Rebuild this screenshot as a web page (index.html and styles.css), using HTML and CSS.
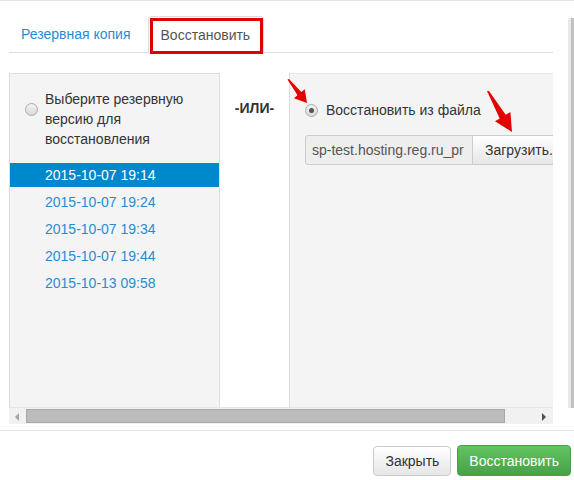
FILE: index.html
```html
<html>
<head>
	<meta http-equiv="Content-Type" content="text/html; charset=UTF-8">
	<link rel="stylesheet" href="styles.css">
</head>
<body>
	<div class="modal">
		<div class="modal_body">
			<ul class="tabs">
				<li class="tab"><a href="#">Резервная копия</a></li>
				<li class="tab tab_active"><a href="#">Восстановить</a></li>
			</ul>
			<div class="scroller">
				<div class="panes">
					<div class="pane_left">
						<label class="pick">
							<span class="radio"></span>
							<span class="pick_text">Выберите резервную версию для восстановления</span>
						</label>
						<ul class="versions">
							<li class="version version_sel">2015-10-07 19:14</li>
							<li class="version">2015-10-07 19:24</li>
							<li class="version">2015-10-07 19:34</li>
							<li class="version">2015-10-07 19:44</li>
							<li class="version">2015-10-13 09:58</li>
						</ul>
					</div>
					<div class="pane_or">-ИЛИ-</div>
					<div class="pane_right">
						<label class="pick_file">
							<span class="radio radio_on"></span>
							<span>Восстановить из файла</span>
						</label>
						<div class="file_group">
							<div class="file_name">sp-test.hosting.reg.ru_pr</div>
							<div class="file_btn">Загрузить...</div>
						</div>
					</div>
				</div>
				<div class="hscroll">
					<span class="hscroll_left"></span>
					<span class="hscroll_thumb"></span>
					<span class="hscroll_right"></span>
				</div>
			</div>
		</div>
		<div class="modal_footer">
			<button class="btn">Закрыть</button>
			<button class="btn btn_ok">Восстановить</button>
		</div>
	</div>
	<div class="vscroll"></div>
	<svg class="marks" width="574" height="480" viewBox="0 0 574 480">
		<polygon fill="#e50000" points="287.5,79.5 297.5,95.3 294,98.2 307,103 304.8,89.2 301.3,92.1 289,79"/>
		<polygon fill="#e50000" points="487,91 499.7,118.4 495,121.2 512,132 510.4,112 505.7,114.8 489,91"/>
	</svg>
</body>
</html>
```

FILE: styles.css
```css
body
{
	margin: 0;
	background-color: #fff;
	font-family: "Liberation Sans", Arial, sans-serif;
	font-size: 14px;
	color: #333;
}
.modal
{
	width: 574px;
	height: 480px;
	border-top: 1px solid #e5e5e5;
	box-sizing: border-box;
	overflow: hidden;
}
.modal_body
{
	padding-left: 9px;
	width: 544px;
}
.tabs
{
	display: flex;
	margin: 15px 0 0 0;
	padding: 0;
	list-style: none;
	border-bottom: 1px solid #ddd;
	height: 36px;
}
.tab
{
	margin-right: 5px;
}
.tab a
{
	display: block;
	height: 36px;
	line-height: 37px;
	padding: 0 12px 0 12px;
	color: #2a8bd4;
	text-decoration: none;
}
.tab_active a
{
	position: relative;
	height: 36px;
	padding: 0 13px 0 12px;
	color: #555;
	background-color: #fff;
	border: 1px solid #ddd;
	border-bottom-color: #fff;
	border-radius: 4px 4px 0 0;
}
.tab_active a:after
{
	content: "";
	position: absolute;
	left: 1px;
	top: 1px;
	right: 0;
	bottom: -1px;
	border: 3px solid #e00000;
}
.scroller
{
	margin-top: 20px;
	width: 544px;
	height: 351px;
	overflow: hidden;
}
.panes
{
	display: flex;
	height: 334px;
	width: 700px;
}
.pane_left
{
	width: 211px;
	height: 334px;
	box-sizing: border-box;
	background-color: #f4f4f4;
	border: 1px solid #ddd;
	border-bottom: none;
}
.pick
{
	display: flex;
	align-items: flex-start;
	padding: 15px 0 0 15px;
	line-height: 20px;
}
.radio
{
	display: inline-block;
	flex: none;
	width: 11px;
	height: 11px;
	border: 1px solid #a9a9a9;
	border-radius: 50%;
	background: linear-gradient(#f3f3f3, #d9d9d9);
	position: relative;
}
.pick .radio
{
	margin-top: 14px;
	margin-right: 7px;
}
.radio_on:after
{
	content: "";
	position: absolute;
	left: 3px;
	top: 3px;
	width: 5px;
	height: 5px;
	border-radius: 50%;
	background-color: #555;
}
.pick_text
{
	width: 150px;
}
.versions
{
	list-style: none;
	margin: 14px 0 0 0;
	padding: 0;
}
.version
{
	height: 24px;
	line-height: 24px;
	margin-bottom: 3px;
	padding-left: 35px;
	color: #2a8bd4;
}
.version_sel
{
	background-color: #0088cc;
	color: #fff;
}
.pane_or
{
	width: 69px;
	padding-top: 25px;
	line-height: 20px;
	text-align: center;
	font-weight: bold;
	background-color: #fff;
}
.pane_right
{
	width: 300px;
	height: 334px;
	box-sizing: border-box;
	background-color: #f4f4f4;
	border-left: 1px solid #ddd;
	border-top: 1px solid #e8e8e8;
	padding: 26px 0 0 15px;
}
.pick_file
{
	display: flex;
	align-items: center;
	height: 20px;
}
.pick_file .radio
{
	margin-right: 8px;
}
.file_group
{
	display: flex;
	margin-top: 15px;
	height: 30px;
}
.file_name
{
	width: 168px;
	box-sizing: border-box;
	padding: 0 6px;
	line-height: 28px;
	background-color: #eee;
	color: #555;
	border: 1px solid #ccc;
	border-radius: 3px 0 0 3px;
	white-space: nowrap;
	overflow: hidden;
}
.file_btn
{
	width: 110px;
	box-sizing: border-box;
	padding: 0 12px;
	line-height: 28px;
	border: 1px solid #ccc;
	border-left: none;
	background: linear-gradient(#fff, #e6e6e6);
	white-space: nowrap;
}
.hscroll
{
	position: relative;
	height: 16px;
	background-color: #f1f1f1;
	border-top: 1px solid #e6e6e6;
}
.hscroll_left
{
	position: absolute;
	left: 6px;
	top: 5px;
	border-right: 4px solid #a3a3a3;
	border-top: 4px solid transparent;
	border-bottom: 4px solid transparent;
}
.hscroll_right
{
	position: absolute;
	right: 7px;
	top: 5px;
	border-left: 4px solid #505050;
	border-top: 4px solid transparent;
	border-bottom: 4px solid transparent;
}
.hscroll_thumb
{
	position: absolute;
	left: 17px;
	top: 1px;
	width: 477px;
	height: 12px;
	background-color: #bcbcbc;
	border: 1px solid #a8a8a8;
}
.modal_footer
{
	margin-top: 6px;
	border-top: 1px solid #e5e5e5;
	display: flex;
	justify-content: flex-end;
	padding: 14px 3px 0 0;
	width: 574px;
	box-sizing: border-box;
	gap: 6px;
}
.btn
{
	height: 30px;
	padding: 0 11px;
	font-family: "Liberation Sans", Arial, sans-serif;
	font-size: 14px;
	color: #333;
	background: linear-gradient(#fff, #e6e6e6);
	border: 1px solid #ccc;
	border-radius: 4px;
	margin-top: 1px;
}
.btn_ok
{
	color: #fff;
	margin-top: 0;
	height: 31px;
	padding: 0 11px;
	background: linear-gradient(#62c462, #48a048);
	border-color: #45a045;
}
.vscroll
{
	position: absolute;
	right: 0;
	top: 18px;
	width: 3px;
	height: 390px;
	background-color: #c1c1c1;
	border-left: 3px solid #e9e9e9;
}
.marks
{
	position: absolute;
	left: 0;
	top: 0;
	pointer-events: none;
}
```
